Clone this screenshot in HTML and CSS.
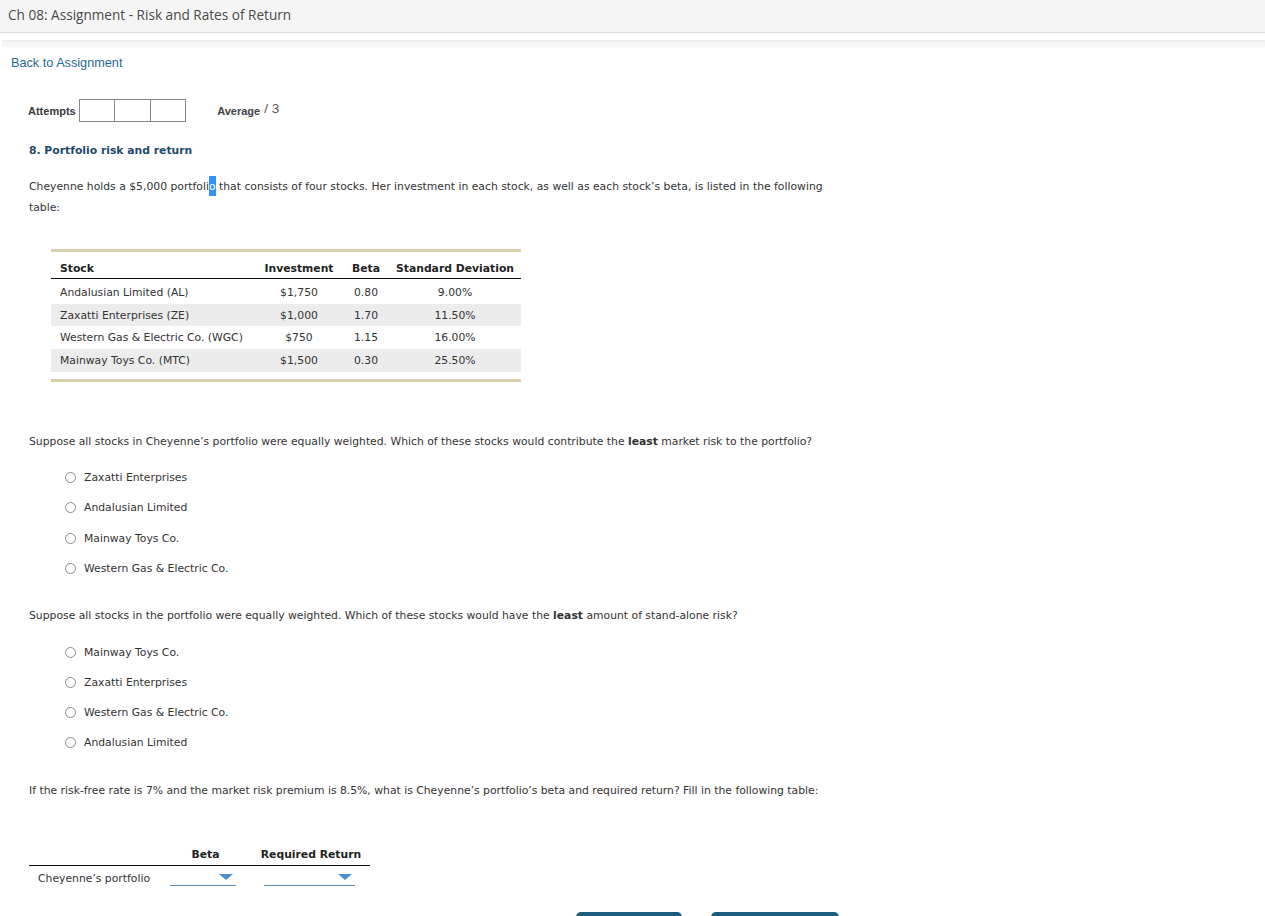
FILE: index.html
```html
<!DOCTYPE html>
<html>
<head>
<meta charset="utf-8">
<link rel="stylesheet" href="styles.css">
</head>
<body>
<div class="topbar">Ch 08: Assignment - Risk and Rates of Return</div>
<div class="band"></div>
<a class="back" href="#">Back to Assignment</a>
<div class="attempts">
  <span class="att-label">Attempts</span>
  <span class="boxes"><span class="box"></span><span class="box"></span><span class="box"></span></span>
  <span class="avg">Average</span><span class="avg-num">/ 3</span>
</div>
<div class="content">
  <h2 class="qtitle">8. Portfolio risk and return</h2>
  <p class="intro">Cheyenne holds a $5,000 portfoli<span class="sel">o</span> that consists of four stocks. Her investment in each stock, as well as each stock’s beta, is listed in the following table:</p>

  <div class="tablewrap">
    <table class="data">
      <thead>
        <tr><th class="c-stock">Stock</th><th class="c-inv">Investment</th><th class="c-beta">Beta</th><th class="c-sd">Standard Deviation</th></tr>
      </thead>
      <tbody>
        <tr><td class="c-stock">Andalusian Limited (AL)</td><td class="c-inv">$1,750</td><td class="c-beta">0.80</td><td class="c-sd">9.00%</td></tr>
        <tr class="alt"><td class="c-stock">Zaxatti Enterprises (ZE)</td><td class="c-inv">$1,000</td><td class="c-beta">1.70</td><td class="c-sd">11.50%</td></tr>
        <tr><td class="c-stock">Western Gas &amp; Electric Co. (WGC)</td><td class="c-inv">$750</td><td class="c-beta">1.15</td><td class="c-sd">16.00%</td></tr>
        <tr class="alt"><td class="c-stock">Mainway Toys Co. (MTC)</td><td class="c-inv">$1,500</td><td class="c-beta">0.30</td><td class="c-sd">25.50%</td></tr>
      </tbody>
    </table>
  </div>

  <p class="question q1">Suppose all stocks in Cheyenne’s portfolio were equally weighted. Which of these stocks would contribute the <b>least</b> market risk to the portfolio?</p>
  <ul class="options">
    <li><span class="radio"></span>Zaxatti Enterprises</li>
    <li><span class="radio"></span>Andalusian Limited</li>
    <li><span class="radio"></span>Mainway Toys Co.</li>
    <li><span class="radio"></span>Western Gas &amp; Electric Co.</li>
  </ul>

  <p class="question q2">Suppose all stocks in the portfolio were equally weighted. Which of these stocks would have the <b>least</b> amount of stand-alone risk?</p>
  <ul class="options">
    <li><span class="radio"></span>Mainway Toys Co.</li>
    <li><span class="radio"></span>Zaxatti Enterprises</li>
    <li><span class="radio"></span>Western Gas &amp; Electric Co.</li>
    <li><span class="radio"></span>Andalusian Limited</li>
  </ul>

  <p class="question q3">If the risk-free rate is 7% and the market risk premium is 8.5%, what is Cheyenne’s portfolio’s beta and required return? Fill in the following table:</p>

  <table class="answer">
    <thead>
      <tr><th class="a-label"></th><th class="a-beta">Beta</th><th class="a-ret">Required Return</th></tr>
    </thead>
    <tbody>
      <tr>
        <td class="a-label">Cheyenne’s portfolio</td>
        <td class="a-beta"><span class="dd dd-beta"><span class="arrow"></span></span></td>
        <td class="a-ret"><span class="dd dd-ret"><span class="arrow"></span></span></td>
      </tr>
    </tbody>
  </table>

  <div class="buttons">
    <span class="btn btn1"></span>
    <span class="btn btn2"></span>
  </div>
</div>
</body>
</html>
```

FILE: styles.css
```css
html, body {
  margin: 0;
  padding: 0;
  background: #fff;
  overflow: hidden;
}
body {
  width: 1265px;
  height: 916px;
  font-family: "DejaVu Sans", Verdana, sans-serif;
  color: #333;
}
.topbar {
  height: 32px;
  line-height: 30px;
  background: #f5f5f5;
  border-bottom: 1px solid #dedede;
  padding-left: 8px;
  font-family: "Open Sans", "Liberation Sans", sans-serif;
  font-size: 13.6px;
  color: #4a4a4a;
}
.band {
  margin: 7px 0 0 2px;
  height: 7px;
  border-top: 1px solid #ececec;
  background: linear-gradient(#f2f2f2, #fbfbfb);
}
.back {
  display: block;
  margin: 7px 0 0 11px;
  font-family: "Liberation Sans", Arial, sans-serif;
  font-size: 12.7px;
  line-height: 16px;
  color: #1f6a92;
  text-decoration: none;
}
.attempts {
  display: flex;
  align-items: center;
  margin: 28px 0 0 28px;
  height: 23px;
  font-family: "Liberation Sans", Arial, sans-serif;
}
.att-label {
  font-size: 11px;
  font-weight: bold;
  color: #3a3a3a;
  margin-right: 3px;
}
.boxes {
  display: flex;
  border: 1px solid #888;
}
.box {
  width: 34.5px;
  height: 21px;
  border-left: 1px solid #888;
}
.box:first-child { border-left: 0; }
.avg {
  margin-left: 31px;
  font-size: 11px;
  font-weight: bold;
  color: #444;
}
.avg-num {
  margin-left: 4px;
  font-size: 13.5px;
  color: #555;
  position: relative;
  top: -2px;
}
.content {
  padding-left: 29px;
  font-size: 10.8px;
}
.qtitle {
  margin: 22px 0 0;
  font-size: 10.8px;
  font-weight: bold;
  color: #1d4a6b;
  line-height: 14px;
}
.intro {
  margin: 18px 0 0;
  width: 815px;
  line-height: 21px;
  color: #333;
}
.sel {
  background: #3390ff;
  color: #fff;
  padding: 4px 0 3px;
}
.tablewrap {
  margin: 31px 0 0 22px;
  width: 470px;
  border-top: 3px solid #d8d1ac;
  border-bottom: 3px solid #d8d1ac;
  padding-bottom: 7px;
}
.data {
  width: 470px;
  border-collapse: collapse;
  font-size: 10.8px;
  color: #333;
}
.data th {
  font-weight: bold;
  color: #222;
  padding: 9px 0 3px;
  border-bottom: 1px solid #111;
  height: 14px;
}
.data td {
  padding: 0;
  height: 22.7px;
}
.data tbody tr:first-child td { padding-top: 2px; }
.data tr.alt td { background: #ececec; }
.c-stock { text-align: left; padding-left: 9px !important; width: 195px; }
.c-inv { text-align: center; width: 88px; }
.c-beta { text-align: center; width: 46px; }
.c-sd { text-align: center; }
.question {
  margin: 0;
  line-height: 14px;
}
.q1 { margin-top: 53px; }
.q2 { margin-top: 34px; }
.q3 { margin-top: 34px; }
.options {
  list-style: none;
  margin: 22px 0 0;
  padding: 0 0 0 36px;
}
.options li {
  display: flex;
  align-items: center;
  height: 14px;
  margin-bottom: 16.2px;
  color: #333;
}
.radio {
  width: 9px;
  height: 9px;
  border: 1px solid #8a8a8a;
  border-radius: 50%;
  margin-right: 8px;
  background: #fff;
}
.answer {
  margin-top: 50px;
  border-collapse: collapse;
  font-size: 10.8px;
}
.answer th {
  font-weight: bold;
  color: #222;
  padding: 0 0 3px;
  border-bottom: 1px solid #111;
  height: 14px;
}
.answer td {
  padding: 6px 0 0;
  height: 14px;
}
.a-label { width: 132px; text-align: left; padding-left: 9px !important; }
.answer th.a-label { padding-left: 0 !important; }
.a-beta { width: 75px; text-align: left; }
.a-ret { width: 125px; text-align: left; }
.answer td.a-ret { padding-left: 19px; width: 106px; }
.answer th.a-beta { text-align: center; padding-right: 4px; width: 71px; }
.answer th.a-ret { text-align: center; padding-left: 7px; width: 118px; }
.dd {
  display: inline-block;
  position: relative;
  height: 12px;
  border-bottom: 1px solid #5a8ab0;
  vertical-align: middle;
}
.dd-beta { width: 66px; }
.dd-ret { width: 91px; }
.arrow {
  position: absolute;
  right: 3px;
  top: 1px;
  width: 0;
  height: 0;
  border-left: 7px solid transparent;
  border-right: 7px solid transparent;
  border-top: 6px solid #4a8fcc;
}
.buttons {
  display: flex;
  gap: 29px;
  margin: 26px 0 0 547px;
}
.btn {
  display: block;
  height: 20px;
  background: #1c5d7f;
  border-radius: 5px 5px 0 0;
}
.btn1 { width: 106px; }
.btn2 { width: 128px; }
```
